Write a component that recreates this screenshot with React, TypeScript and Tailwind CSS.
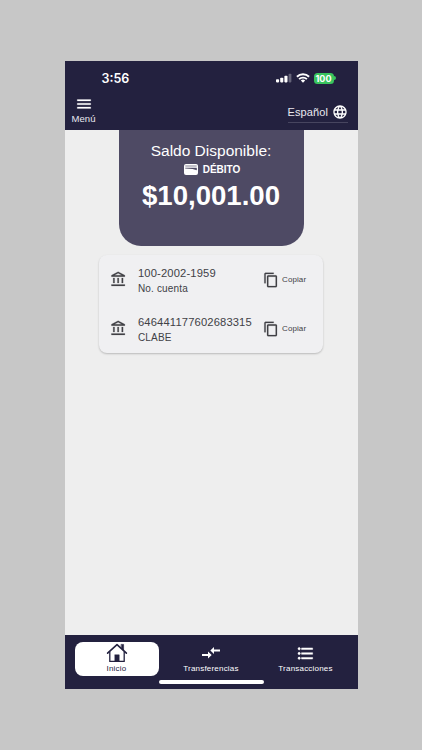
import type { ReactNode } from "react";
import {
  MdContentCopy,
  MdFormatListBulleted,
  MdLanguage,
  MdMenu,
  MdOutlineAccountBalance,
} from "react-icons/md";

const ACCOUNTS = [
  { key: "account", number: "100-2002-1959", label: "No. cuenta" },
  { key: "clabe", number: "646441177602683315", label: "CLABE" },
];

const StatusBar = () => (
  <div className="flex h-[34px] items-center justify-between pr-[22px] pl-[37px] text-white">
    <span className="pt-px font-['Inter',sans-serif] text-[12.5px] leading-4 font-semibold">3:56</span>
    <div className="flex items-center">
      {/* Signal */}
      <svg width="16" height="10" viewBox="0 0 16 10" fill="currentColor">
        <rect x="0" y="6.2" width="3.1" height="3.2" rx="0.8" />
        <rect x="4.2" y="4.7" width="3.1" height="4.7" rx="0.8" />
        <rect x="8.4" y="2.8" width="3.1" height="6.6" rx="0.8" />
        <rect x="12.6" y="0.7" width="2.8" height="8.7" rx="0.8" opacity="0.3" />
      </svg>
      {/* Wifi */}
      <svg className="ml-[4px]" width="14" height="10" viewBox="0 0 14 10" fill="none" stroke="currentColor" strokeWidth="1.9">
        <path d="M0.9 3.8a8.7 8.7 0 0 1 12.2 0" />
        <path d="M3.1 6.2a5.5 5.5 0 0 1 7.8 0" />
        <path d="M7 9.8 4.8 7.6a3.2 3.2 0 0 1 4.4 0z" fill="currentColor" stroke="none" />
      </svg>
      {/* Battery */}
      <span className="ml-[4px] flex h-[11px] w-[20px] items-center justify-center rounded-[3.5px] bg-[#39c45e] font-['Inter',sans-serif] text-[9px] leading-none font-bold">
        100
      </span>
      <span className="ml-[0.5px] h-1 w-[1.5px] rounded-r-full bg-[#39c45e]" />
    </div>
  </div>
);

const Header = () => (
  <header className="h-[69px] bg-[#23213f] text-white">
    <StatusBar />
    <div className="flex justify-between pr-[10px] pl-[6px]">
      <button className="flex w-[26px] flex-col items-center">
        <MdMenu className="size-[18px] [&>path[fill=none]]:stroke-none" stroke="currentColor" strokeWidth="0.3" />
        <span className="text-[9.5px] leading-3 tracking-[0.1px] text-[#e9e8ef]">Menú</span>
      </button>
      <button className="mt-[6px] flex h-[22px] w-[60px] items-center justify-between border-b border-[#47455f]">
        <span className="text-[11px] leading-4 tracking-[0.1px] text-[#e9e8ef]">Español</span>
        <MdLanguage className="size-4 shrink-0" />
      </button>
    </div>
  </header>
);

const Balance = () => (
  <section className="mx-auto flex h-[116px] w-[185px] flex-col items-center rounded-b-[22px] bg-[#4e4a64] text-white">
    <p className="mt-[11px] text-[15.5px] leading-5 whitespace-nowrap">Saldo Disponible:</p>
    <div className="flex h-[17px] items-center gap-[5px] pl-[2px]">
      <svg width="14" height="11" viewBox="0 0 14 11">
        <rect width="14" height="11" rx="2" fill="currentColor" />
        <path d="M1.2 3.8h11.6v2.4L8.6 5.1 1.2 4.5z" fill="#4e4a64" />
        <path d="M1.3 2h11.4" stroke="#4e4a64" strokeWidth="0.7" />
      </svg>
      <span className="text-[10px] leading-3 font-bold">DÉBITO</span>
    </div>
    <p className="mt-px text-[27.6px] leading-[34px] font-bold">$10,001.00</p>
  </section>
);

const AccountRow = ({ number, label }: { number: string; label: string }) => (
  <div className="flex h-[49px] items-center pr-4 pl-[11px] text-[#414146]">
    <MdOutlineAccountBalance className="size-[17px] shrink-0 [&>path[fill=none]]:stroke-none" stroke="currentColor" strokeWidth="0.3" />
    <div className="ml-[11px] w-[125px] pt-[3px]">
      <p className="text-[11.2px] leading-[15px] tracking-[0.15px] whitespace-nowrap">{number}</p>
      <p className="text-[10px] leading-[15px] tracking-[0.15px]">{label}</p>
    </div>
    <button className="flex items-center">
      <MdContentCopy className="size-4 [&>path[fill=none]]:stroke-none" stroke="currentColor" strokeWidth="0.3" />
      <span className="ml-[3px] text-[8px] leading-3 tracking-[0.1px]">Copiar</span>
    </button>
  </div>
);

const Tab = ({ icon, label, active }: { icon: ReactNode; label: string; active?: boolean }) => (
  <button
    className={
      active
        ? "flex h-[34px] w-[84px] flex-col items-center rounded-[8px] bg-white text-[#23213f]"
        : "flex h-[34px] w-[84px] flex-col items-center text-white"
    }
  >
    <span className="flex h-[22px] items-center">{icon}</span>
    <span className="text-[8px] leading-[10px] tracking-[0.2px]">{label}</span>
  </button>
);

const HomeIcon = () => (
  <svg width="22" height="20" viewBox="0 0 22 20" fill="none" stroke="currentColor" strokeLinecap="round" strokeLinejoin="round">
    <path d="M1.6 10.2 11 1.6l9.4 8.6" strokeWidth="1.6" />
    <path d="M15.4 1.4h2.2v6l-2.2-2z" fill="currentColor" strokeWidth="0.6" />
    <path d="M3.8 9v9.4h14.4V9" strokeWidth="1.3" />
    <path d="M9 11.8h4.2v6.6H9z" fill="currentColor" strokeWidth="0.5" />
  </svg>
);

const TransferIcon = () => (
  <svg width="18" height="14" viewBox="0 0 18 14" fill="currentColor">
    <path d="M8.3 4.5 12 .9v2.7h6v1.8h-6v2.7z" />
    <path d="M9.7 9 6 5.4v2.7H0v1.8h6v2.7z" />
  </svg>
);

const BottomNav = () => (
  <nav className="flex h-[54px] flex-col bg-[#23213f]">
    <div className="flex justify-between px-[10px] pt-[7px]">
      <Tab active icon={<HomeIcon />} label="Inicio" />
      <Tab icon={<TransferIcon />} label="Transferencias" />
      <Tab
        icon={<MdFormatListBulleted className="size-[19px] [&>path[fill=none]]:stroke-none" stroke="currentColor" strokeWidth="0.6" />}
        label="Transacciones"
      />
    </div>
    {/* Home indicator */}
    <div className="mx-auto mt-[4px] h-[3.5px] w-[105px] rounded-full bg-white" />
  </nav>
);

const App = () => {
  return (
    <div className="flex h-[750px] w-[422px] flex-col items-center bg-[#c7c7c7] pt-[61px] font-['Liberation_Sans',Arial,sans-serif]">
      <div className="flex h-[628px] w-[293px] flex-col bg-[#eeeeee]">
        <Header />
        <main className="flex-1">
          <Balance />
          <section className="mx-auto mt-[9px] h-[98px] w-[224px] rounded-[8px] bg-[#f0f0f2] shadow-[0_1px_2px_rgba(0,0,0,0.22)]">
            {ACCOUNTS.map((account) => (
              <AccountRow key={account.key} number={account.number} label={account.label} />
            ))}
          </section>
        </main>
        <BottomNav />
      </div>
    </div>
  );
};

export default App;
